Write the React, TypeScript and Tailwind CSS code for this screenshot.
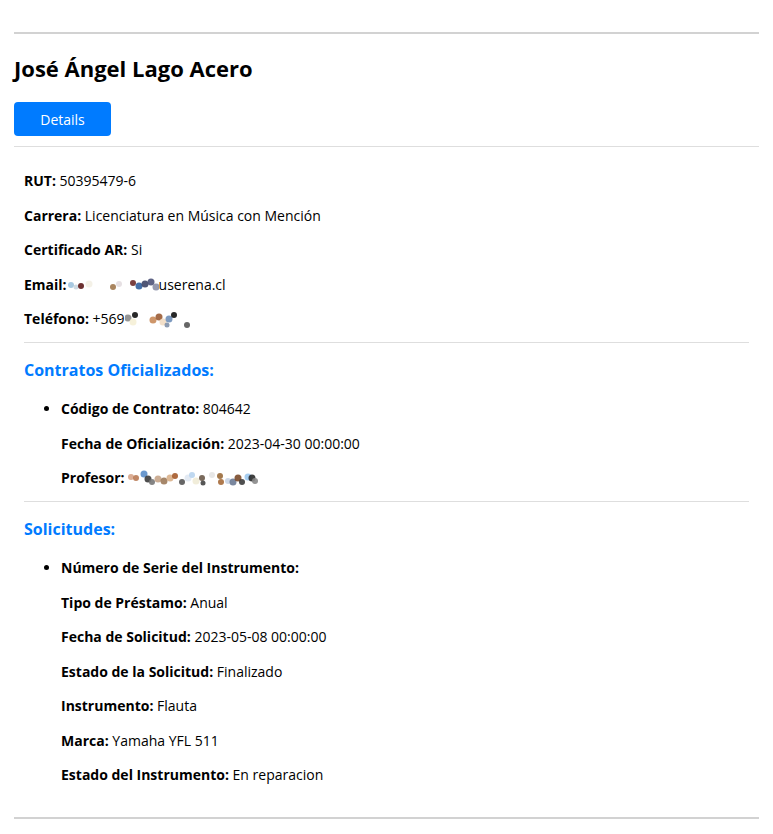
import React from 'react';

type Dot = [number, number, number, string];

const emailDots: Dot[] = [
  [4, 9, 3, '#9ec3de'], [9, 11, 2.5, '#c9d6df'], [14, 10, 3, '#5c1a1a'], [22, 8, 3.5, '#f3f0e4'],
  [46, 11, 3, '#a0784e'], [52, 8, 3, '#e3dde0'], [66, 7, 3, '#6b2b2b'], [72, 10, 3.5, '#2f5f9e'],
  [78, 8, 3.5, '#3d4466'], [84, 6, 3.5, '#4c5278'], [89, 11, 3.5, '#8a8ea6'],
];
const phoneDots: Dot[] = [
  [3, 8, 3.5, '#8a8a8a'], [10, 5, 3, '#111111'], [8, 12, 3.5, '#f5f0d6'], [28, 10, 3.5, '#c98b5a'],
  [34, 7, 3.5, '#9a5b34'], [38, 12, 3.5, '#f1dcc3'], [44, 9, 3.5, '#6f8fb8'], [49, 5, 3, '#111111'],
  [42, 15, 2.5, '#8090a8'], [62, 15, 3, '#555555'],
];
const profDots: Dot[] = [
  [3, 8, 3, '#d7a58a'], [8, 9, 3, '#b97a54'], [16, 5, 3.5, '#5b8ec9'], [20, 10, 3.5, '#3b3b3b'],
  [24, 13, 3, '#777777'], [30, 10, 3.5, '#c6a58a'], [36, 12, 3.5, '#9c7a5a'], [42, 9, 3.5, '#d9b08a'],
  [47, 7, 3, '#a55a2a'], [54, 13, 3, '#555'], [60, 9, 3.5, '#e0e8f2'], [64, 6, 3, '#b8d4ee'],
  [68, 12, 3.5, '#f0ebd6'], [74, 9, 3, '#6b5a4a'], [75, 14, 2.5, '#444'], [84, 6, 3, '#e4e4e4'],
  [92, 7, 3, '#9a6a3a'], [93, 13, 3, '#a56a3a'], [100, 12, 3, '#c8d4e6'], [105, 13, 3.5, '#6c7a94'],
  [110, 9, 3.5, '#7a4a2a'], [114, 13, 3, '#3c3c3c'], [120, 8, 3.5, '#9cc8ee'], [124, 9, 3.5, '#2a2a2a'],
  [127, 12, 3, '#888'],
];

const Blur = ({ dots, w }: { dots: Dot[]; w: number }) => (
  <svg width={w} height={18} className="inline-block align-[-4px]" aria-hidden="true">
    {dots.map(([x, y, r, c], i) => (
      <circle key={i} cx={x} cy={y} r={r} fill={c} opacity={0.9} />
    ))}
  </svg>
);

const Row = ({ label, children }: { label: string; children?: React.ReactNode }) => (
  <p className="leading-[21px]">
    <strong className="font-bold">{label}</strong> {children}
  </p>
);

export default function App() {
  return (
    <div className="min-h-screen bg-white px-[14px] pt-[32px] text-[14px] text-black" style={{ fontFamily: '"Segoe UI", "Open Sans", sans-serif' }}>
      <div className="border-t-2 border-b-2 border-[#d2d2d2]">
        <h2 className="mt-[20px] text-[22px] font-bold leading-[28px]">José Ángel Lago Acero</h2>
        <button className="mt-[20px] h-[34px] w-[97px] rounded-[4px] bg-[#007bff] text-[14px] text-white">Details</button>
        <hr className="mt-[10px] border-t border-[#dedede]" />
        <div className="px-[10px] pt-[23px] pb-[32px]">
          <div className="flex flex-col gap-[13.5px]">
            <Row label="RUT:">50395479-6</Row>
            <Row label="Carrera:">Licenciatura en Música con Mención</Row>
            <Row label="Certificado AR:">Si</Row>
            <p className="leading-[21px]">
              <strong className="font-bold">Email:</strong>
              <Blur dots={emailDots} w={92} />userena.cl
            </p>
            <p className="leading-[21px]">
              <strong className="font-bold">Teléfono:</strong> +569<Blur dots={phoneDots} w={66} />
            </p>
          </div>
          <hr className="mt-[13px] border-t border-[#dedede]" />
          <h3 className="mt-[15px] text-[16px] font-bold leading-[24px] text-[#007bff]">Contratos Oficializados:</h3>
          <ul className="mt-[16px] list-disc pl-[37px]">
            <li>
              <div className="flex flex-col gap-[13.5px]">
                <Row label="Código de Contrato:">804642</Row>
                <Row label="Fecha de Oficialización:">2023-04-30 00:00:00</Row>
                <p className="leading-[21px]">
                  <strong className="font-bold">Profesor:</strong> <Blur dots={profDots} w={132} />
                </p>
              </div>
            </li>
          </ul>
          <hr className="mt-[13px] border-t border-[#dedede]" />
          <h3 className="mt-[15px] text-[16px] font-bold leading-[24px] text-[#007bff]">Solicitudes:</h3>
          <ul className="mt-[16px] list-disc pl-[37px]">
            <li>
              <div className="flex flex-col gap-[13.5px]">
                <Row label="Número de Serie del Instrumento:" />
                <Row label="Tipo de Préstamo:">Anual</Row>
                <Row label="Fecha de Solicitud:">2023-05-08 00:00:00</Row>
                <Row label="Estado de la Solicitud:">Finalizado</Row>
                <Row label="Instrumento:">Flauta</Row>
                <Row label="Marca:">Yamaha YFL 511</Row>
                <Row label="Estado del Instrumento:">En reparacion</Row>
              </div>
            </li>
          </ul>
        </div>
      </div>
    </div>
  );
}
